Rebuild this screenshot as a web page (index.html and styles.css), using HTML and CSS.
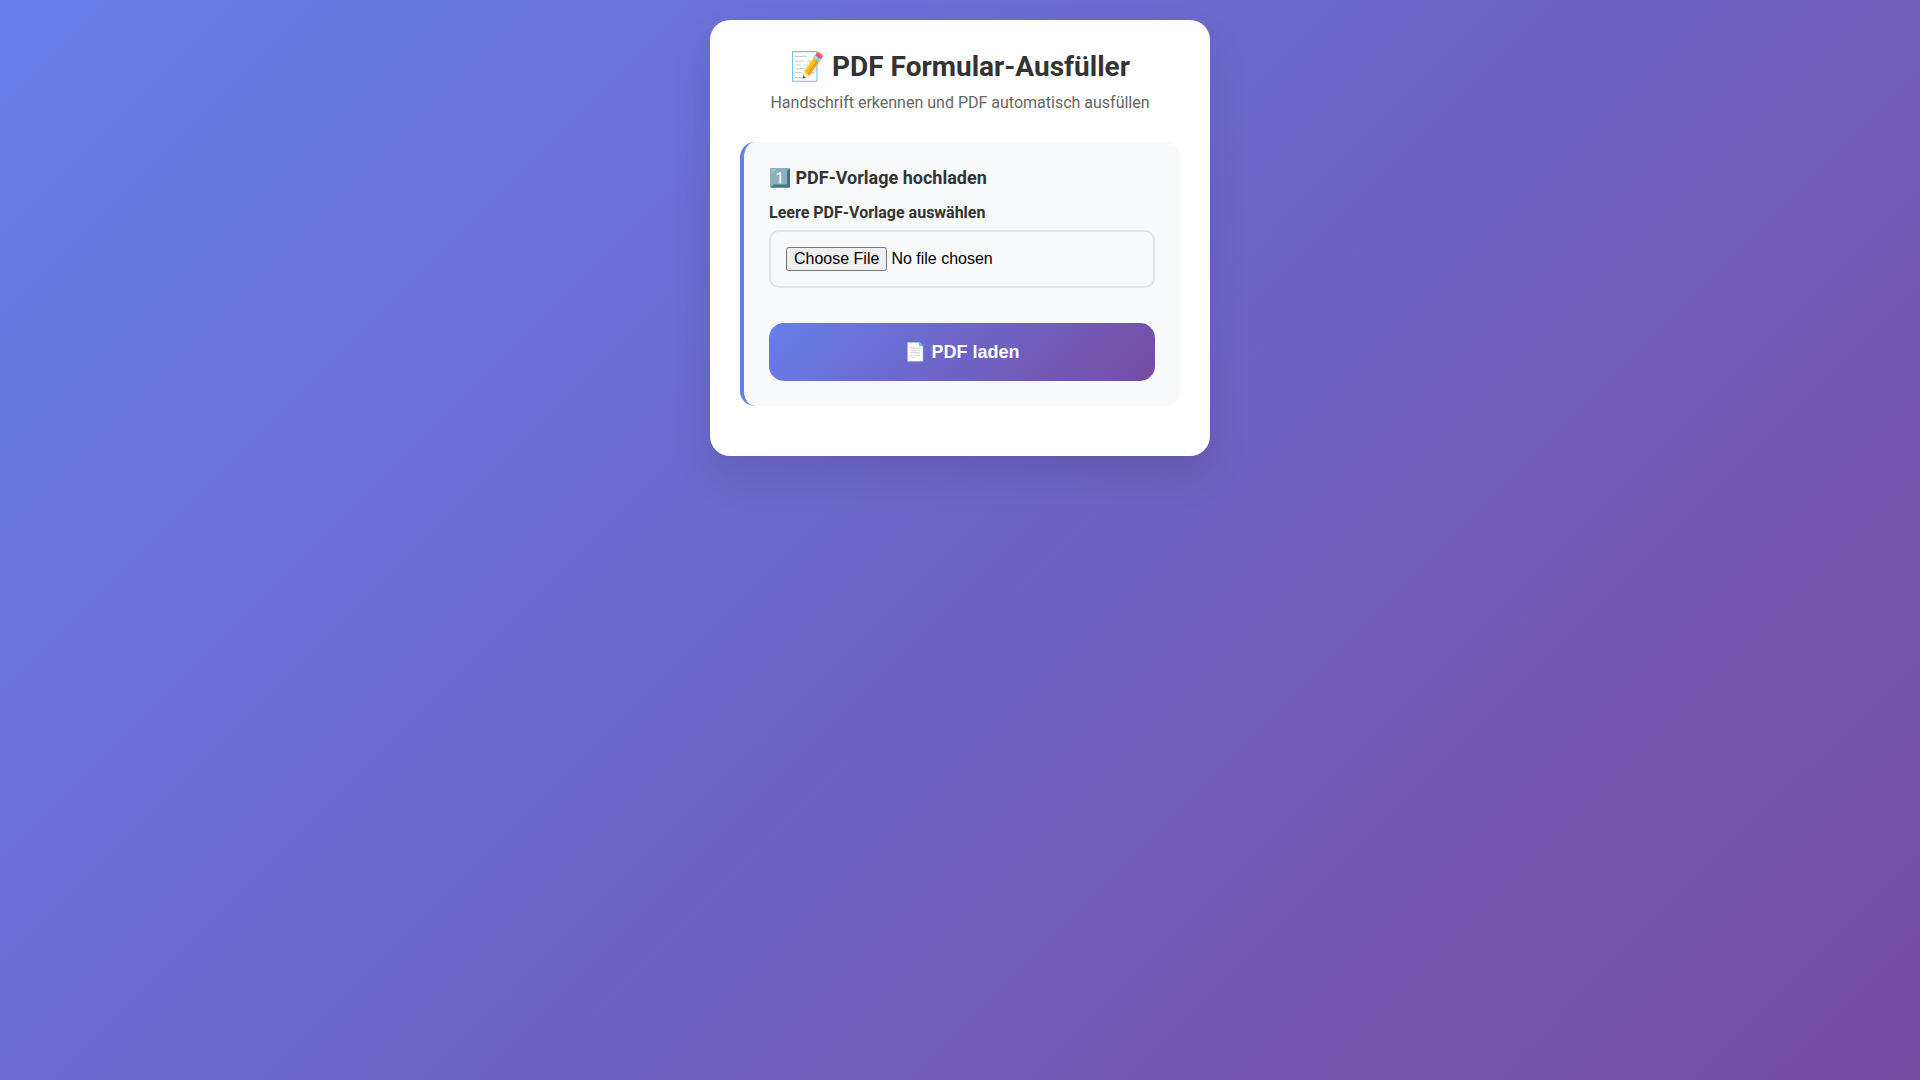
FILE: index.html
```html
<!DOCTYPE html>
<html lang="de">
<head>
<meta charset="UTF-8">
<meta name="viewport" content="width=device-width, initial-scale=1.0">
<title>PDF Formular-Ausfüller</title>
<link rel="stylesheet" href="styles.css">
</head>
<body>
<main class="container">
  <h1 class="title">📝 PDF Formular-Ausfüller</h1>
  <p class="subtitle">Handschrift erkennen und PDF automatisch ausfüllen</p>
  <section class="step">
    <h2 class="step-title">1️⃣ PDF-Vorlage hochladen</h2>
    <div class="form-group">
      <label class="label" for="pdfFile">Leere PDF-Vorlage auswählen</label>
      <input class="file-input" type="file" id="pdfFile" accept=".pdf">
    </div>
    <button class="button" type="button">📄 PDF laden</button>
  </section>
</main>
</body>
</html>
```
FILE: styles.css
```css
* {
  margin: 0;
  padding: 0;
  box-sizing: border-box;
}

body {
  font-family: Roboto, sans-serif;
  background: linear-gradient(135deg, #667eea 0%, #764ba2 100%);
  min-height: 100vh;
  padding: 20px;
}

.container {
  max-width: 500px;
  margin: 0 auto;
  padding: 30px;
  background: white;
  border-radius: 20px;
  box-shadow: 0 20px 40px rgba(0, 0, 0, 0.1);
}

.title {
  margin-bottom: 10px;
  color: #333;
  font-size: 28px;
  text-align: center;
}

.subtitle {
  margin-bottom: 30px;
  color: #666;
  font-size: 16px;
  text-align: center;
}

.step {
  margin-bottom: 20px;
  padding: 25px;
  background: #f8f9fb;
  border-left: 4px solid #667eea;
  border-radius: 15px;
}

.step-title {
  margin-bottom: 15px;
  color: #333;
  font-size: 18px;
}

.form-group {
  margin-bottom: 35px;
}

.label {
  display: block;
  margin-bottom: 8px;
  color: #333;
  font-weight: 700;
}

.file-input {
  width: 100%;
  padding: 15px;
  border: 2px solid #e1e3e9;
  border-radius: 10px;
  font-size: 16px;
}

.button {
  width: 100%;
  padding: 18px;
  color: white;
  background: linear-gradient(135deg, #667eea 0%, #764ba2 100%);
  border: none;
  border-radius: 15px;
  font-size: 18px;
  font-weight: 600;
  cursor: pointer;
}
```
